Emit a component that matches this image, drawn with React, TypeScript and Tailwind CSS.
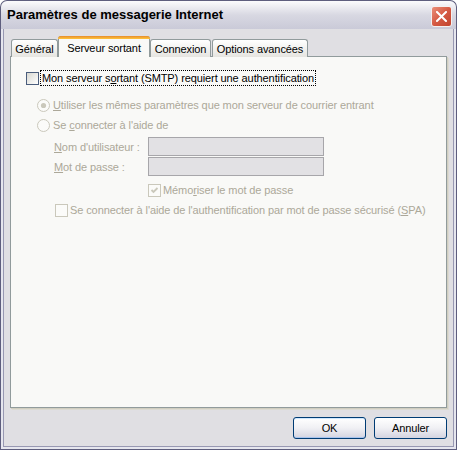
import React from 'react';

const dis = 'text-[#aca899]';

const Checkbox = ({ checked = false, disabled = false }: { checked?: boolean; disabled?: boolean }) => (
  <span
    className={`flex h-[13px] w-[13px] shrink-0 items-center justify-center border ${
      disabled ? 'border-[#cac8bb] bg-[#fbfbf9]' : 'border-[#4a5d7c] bg-gradient-to-br from-[#d8d8d2] to-white'
    }`}
  >
    {checked && (
      <svg width="9" height="9" viewBox="0 0 9 9">
        <path d="M1.5 4 L3.5 6 L7.5 2" fill="none" stroke={disabled ? '#cac8bb' : '#21a121'} strokeWidth="1.8" />
      </svg>
    )}
  </span>
);

const Radio = ({ checked = false }: { checked?: boolean }) => (
  <svg width="13" height="13" viewBox="0 0 13 13" className="shrink-0">
    <circle cx="6.5" cy="6.5" r="6" fill="#fbfbf9" stroke="#cac8bb" />
    {checked && <circle cx="6.5" cy="6.5" r="2.6" fill="#cac8bb" />}
  </svg>
);

const Tab = ({ children, w }: { children: React.ReactNode; w: string }) => (
  <div
    className={`${w} flex h-[18px] items-center justify-center rounded-t-[3px] border border-b-0 border-[#919b9c] bg-gradient-to-b from-white to-[#e6e5e0] pt-[1px]`}
  >
    {children}
  </div>
);

const Button = ({ children, isDefault = false }: { children: React.ReactNode; isDefault?: boolean }) => (
  <button
    className={`flex h-[22px] w-[73px] items-center justify-center rounded-[3px] border border-[#003c74] bg-gradient-to-b from-white via-[#f0f0f4] to-[#d4d4e0] text-[11px] ${
      isDefault ? 'shadow-[inset_0_1px_0_#cee7ff,inset_0_-1px_0_#a9c4ee]' : ''
    }`}
  >
    {children}
  </button>
);

export default function App() {
  return (
    <div className="h-[450px] w-[457px] font-['Liberation_Sans',Arial,sans-serif] text-[11px] leading-[16px] tracking-[-0.1px] text-black">
      <div className="flex h-full flex-col">
        {/* title bar */}
        <div className="flex h-[29px] shrink-0 items-start justify-between rounded-t-[7px] border border-b-0 border-[#5e5e7e] bg-gradient-to-b from-[#fbfbfd] via-[#d8d8e2] to-[#cacad8] pl-[6px] pr-[4px]">
          <span className="mt-[6px] text-[13px] font-bold leading-[16px] tracking-normal text-[#000]">
            Paramètres de messagerie Internet
          </span>
          <button className="mt-[5px] flex h-[21px] w-[21px] items-center justify-center rounded-[3px] border border-[#f4f0f0] bg-gradient-to-br from-[#ea8f7a] via-[#d55a44] to-[#c2442f]">
            <svg width="11" height="11" viewBox="0 0 11 11">
              <path d="M1 1 L10 10 M10 1 L1 10" stroke="white" strokeWidth="2" strokeLinecap="square" />
            </svg>
          </button>
        </div>

        {/* frame */}
        <div className="flex flex-1 flex-col border-x border-b border-[#5e5e7e]">
          <div className="flex flex-1 flex-col border-x-2 border-b-2 border-[#e6e6ee]">
            <div className="flex flex-1 flex-col border-x border-b border-[#9898b2] bg-[#e0dfe3] px-[6px] pt-[7px]">
              {/* tabs */}
              <div className="relative z-10 -mb-px flex h-[21px] items-end pl-[1px]">
                <Tab w="w-[47px]">Général</Tab>
                <div className="flex h-[21px] w-[92px] flex-col rounded-t-[3px] border border-b-0 border-[#919b9c] bg-[#f9f9f7]">
                  <div className="-mx-px -mt-px h-[3px] rounded-t-[3px] bg-gradient-to-b from-[#e68b2c] to-[#ffc73c]" />
                  <div className="flex flex-1 items-center justify-center pb-[1px]">Serveur sortant</div>
                </div>
                <Tab w="w-[61px]">Connexion</Tab>
                <div className="w-[1px]" />
                <Tab w="w-[96px]">Options avancées</Tab>
              </div>

              {/* panel */}
              <div className="flex h-[352px] w-[437px] flex-col border border-[#919b9c] bg-[#f9f9f7] shadow-[1px_1px_0_#d0cec0,2px_2px_0_#dcdad2]">
                <div className="ml-[15px] mt-[13px] flex h-[16px] items-center">
                  <Checkbox />
                  <span className="ml-[1px] border border-dotted border-black px-[1px] leading-[14px]">
                    Mon serveur s<span className="underline">o</span>rtant (SMTP) requiert une authentification
                  </span>
                </div>

                <div className={`ml-[26px] mt-[11px] flex h-[16px] items-center gap-[3px] ${dis}`}>
                  <Radio checked />
                  <span>
                    <span className="underline">U</span>tiliser les mêmes paramètres que mon serveur de courrier entrant
                  </span>
                </div>

                <div className={`ml-[26px] mt-[4px] flex h-[16px] items-center gap-[3px] ${dis}`}>
                  <Radio />
                  <span>
                    Se <span className="underline">c</span>onnecter à l'aide de
                  </span>
                </div>

                <div className={`ml-[43px] mt-[4px] flex h-[19px] items-center ${dis}`}>
                  <span className="w-[94px]">
                    <span className="underline">N</span>om d'utilisateur :
                  </span>
                  <div className="h-[19px] w-[176px] border border-[#a7a6aa] bg-[#e2e1e4]" />
                </div>

                <div className={`ml-[43px] mt-[1px] flex h-[19px] items-center ${dis}`}>
                  <span className="w-[94px]">
                    <span className="underline">M</span>ot de passe :
                  </span>
                  <div className="h-[19px] w-[176px] border border-[#a7a6aa] bg-[#e2e1e4]" />
                </div>

                <div className={`ml-[137px] mt-[6px] flex h-[16px] items-center gap-[2px] ${dis}`}>
                  <Checkbox checked disabled />
                  <span>
                    Mémo<span className="underline">r</span>iser le mot de passe
                  </span>
                </div>

                <div className={`ml-[44px] mt-[4px] flex h-[16px] items-center gap-[2px] ${dis}`}>
                  <Checkbox disabled />
                  <span>
                    Se connecter à l'aide de l'authentification par mot de passe sécurisé (<span className="underline">S</span>PA)
                  </span>
                </div>
              </div>

              {/* buttons */}
              <div className="mt-[9px] flex justify-end gap-[8px]">
                <Button isDefault>OK</Button>
                <Button>Annuler</Button>
              </div>
            </div>
          </div>
        </div>
      </div>
    </div>
  );
}
